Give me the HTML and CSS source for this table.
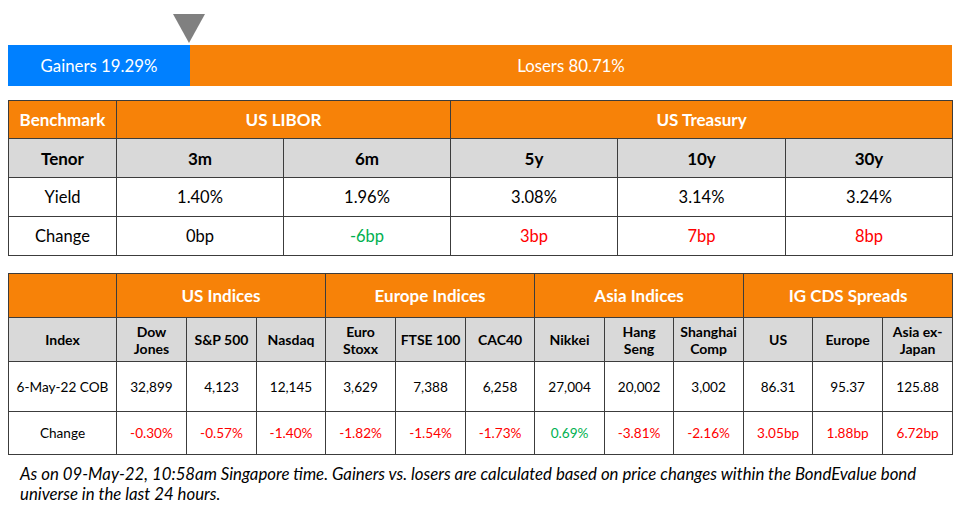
FILE: index.html
```html
<!DOCTYPE html>
<html>
<head>
<meta charset="utf-8">
<link rel="stylesheet" href="styles.css">
</head>
<body>
<div class="page">
  <div class="ratio">
    <div class="gain" style="width:182px">Gainers 19.29%</div>
    <div class="lose">Losers 80.71%</div>
    <div class="marker" style="left:165px"></div>
  </div>

  <table class="t t1">
    <colgroup>
      <col style="width:108px"><col style="width:167px"><col style="width:167px"><col style="width:167px"><col style="width:168px"><col style="width:167px">
    </colgroup>
    <tr class="hd"><td>Benchmark</td><td colspan="2" class="c">US LIBOR</td><td colspan="3" class="c">US Treasury</td></tr>
    <tr class="sub"><td>Tenor</td><td>3m</td><td>6m</td><td>5y</td><td>10y</td><td>30y</td></tr>
    <tr class="dt"><td>Yield</td><td>1.40%</td><td>1.96%</td><td>3.08%</td><td>3.14%</td><td>3.24%</td></tr>
    <tr class="dt"><td>Change</td><td>0bp</td><td class="g">-6bp</td><td class="r">3bp</td><td class="r">7bp</td><td class="r">8bp</td></tr>
  </table>

  <table class="t t2">
    <colgroup>
      <col style="width:108px"><col style="width:70px"><col style="width:70px"><col style="width:69px"><col style="width:70px"><col style="width:70px"><col style="width:69px"><col style="width:70px"><col style="width:69px"><col style="width:70px"><col style="width:69px"><col style="width:70px"><col style="width:70px">
    </colgroup>
    <tr class="hd"><td></td><td colspan="3">US Indices</td><td colspan="3">Europe Indices</td><td colspan="3">Asia Indices</td><td colspan="3">IG CDS Spreads</td></tr>
    <tr class="sub"><td>Index</td><td>Dow<br>Jones</td><td>S&amp;P 500</td><td>Nasdaq</td><td>Euro<br>Stoxx</td><td>FTSE 100</td><td>CAC40</td><td>Nikkei</td><td>Hang<br>Seng</td><td>Shanghai<br>Comp</td><td>US</td><td>Europe</td><td>Asia ex-<br>Japan</td></tr>
    <tr class="dt d1"><td>6-May-22 COB</td><td>32,899</td><td>4,123</td><td>12,145</td><td>3,629</td><td>7,388</td><td>6,258</td><td>27,004</td><td>20,002</td><td>3,002</td><td>86.31</td><td>95.37</td><td>125.88</td></tr>
    <tr class="dt d2"><td>Change</td><td class="r">-0.30%</td><td class="r">-0.57%</td><td class="r">-1.40%</td><td class="r">-1.82%</td><td class="r">-1.54%</td><td class="r">-1.73%</td><td class="g">0.69%</td><td class="r">-3.81%</td><td class="r">-2.16%</td><td class="r">3.05bp</td><td class="r">1.88bp</td><td class="r">6.72bp</td></tr>
  </table>

  <p class="note">As on 09-May-22, 10:58am Singapore time. Gainers vs. losers are calculated based on price changes within the BondEvalue bond<br>universe in the last 24 hours.</p>
</div>
</body>
</html>
```

FILE: styles.css
```css
html, body {
  margin: 0;
  padding: 0;
  background: #ffffff;
}
.page {
  width: 944px;
  padding: 45px 8px 0 8px;
  font-family: Lato, "Open Sans", sans-serif;
  color: #000;
}
.ratio {
  position: relative;
  display: flex;
  height: 41px;
  color: #fff;
  font-size: 16.8px;
}
.gain {
  background: #0080ff;
  display: flex;
  align-items: center;
  justify-content: center;
}
.lose {
  flex: 1;
  background: #f78208;
  display: flex;
  align-items: center;
  justify-content: center;
}
.marker {
  position: absolute;
  top: -31px;
  width: 0;
  height: 0;
  border-left: 16px solid transparent;
  border-right: 16px solid transparent;
  border-top: 29px solid #808080;
}
.t {
  border-collapse: collapse;
  table-layout: fixed;
  width: 944px;
  text-align: center;
}
.t td {
  border: 1px solid #3c3c3c;
  padding: 0;
  vertical-align: middle;
}
.t1 {
  margin-top: 14px;
  font-size: 16.5px;
}
.t1 .hd td { height: 37px; font-size: 17px; }
.t1 .sub td { height: 38px; font-size: 17px; }
.t1 .dt td { height: 38px; }
.hd td {
  background: #f78208;
  color: #fff;
  font-weight: bold;
}
.sub td {
  background: #d9d9d9;
  font-weight: bold;
}
.t2 {
  margin-top: 17px;
  font-size: 13.6px;
}
.t2 .hd td { height: 43px; font-size: 17px; }
.t2 .sub td { height: 43px; line-height: 17px; font-size: 14px; }
.t2 .d1 td { height: 49px; }
.t2 .d2 td { height: 42px; }
.r { color: #ff0000; }
.g { color: #00b050; }
.note {
  margin: 9px 0 0 12px;
  font-style: italic;
  font-size: 16.8px;
  line-height: 20px;
  white-space: nowrap;
}
```
